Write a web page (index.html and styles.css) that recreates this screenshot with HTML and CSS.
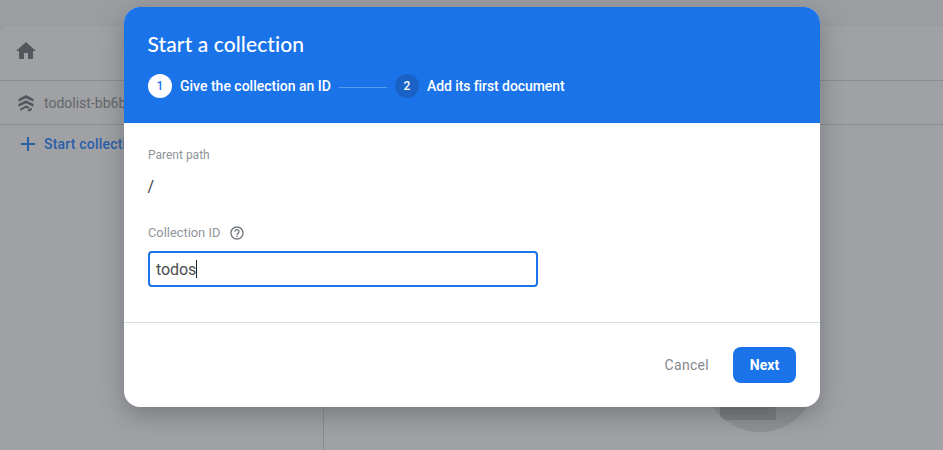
FILE: index.html
```html
<!DOCTYPE html>
<html lang="en">
<head>
<meta charset="utf-8">
<title>Start a collection</title>
<link rel="stylesheet" href="styles.css">
</head>
<body>
<main class="page">
  <section class="panel">
    <div class="crumb-row">
      <svg class="home" viewBox="0 0 24 24" width="24" height="24"><path d="M10 20v-6h4v6h5v-8h3L12 3 2 12h3v8z"/></svg>
    </div>
    <div class="project-row">
      <svg class="stack" viewBox="0 0 20 20" width="20" height="20"><path d="M10 2 2.500 6v2.800L10 5.200l7.500 3.600V6z"/><path d="M10 7.200 2.500 11v2.800L10 10.200l7.500 3.600V11z"/><path d="M10 12.500 4 15.700v2L10 14.800l2 .9 1.500-1.600z"/><path d="M11.500 18.500l1-2.500 3.500-1.200-.5 2.700z"/></svg>
      <span class="project-name">todolist-bb6b</span>
    </div>
    <div class="content">
      <div class="sidebar">
        <div class="start">
          <svg class="plus" viewBox="0 0 16 16" width="16" height="16"><path d="M7 1h2v6h6v2H9v6H7V9H1V7h6z"/></svg>
          <span>Start collection</span>
        </div>
      </div>
      <div class="canvas">
        <div class="disc"><div class="sheet"></div></div>
      </div>
    </div>
  </section>
</main>
<div class="overlay">
  <div class="dialog" role="dialog">
    <header class="dialog-head">
      <h1 class="dialog-title">Start a collection</h1>
      <ol class="steps">
        <li class="step"><span class="badge badge-active">1</span><span>Give the collection an ID</span></li>
        <li class="step-line"></li>
        <li class="step step-next"><span class="badge badge-next">2</span><span>Add its first document</span></li>
      </ol>
    </header>
    <div class="dialog-body">
      <div class="label">Parent path</div>
      <div class="path">/</div>
      <div class="label label-id">
        <span>Collection ID</span>
        <svg class="help" viewBox="0 0 24 24" width="16" height="16"><path d="M11 18h2v-2h-2v2zm1-16C6.480 2 2 6.480 2 12s4.480 10 10 10 10-4.480 10-10S17.520 2 12 2zm0 18c-4.410 0-8-3.590-8-8s3.590-8 8-8 8 3.590 8 8-3.590 8-8 8zm0-14c-2.210 0-4 1.790-4 4h2c0-1.100.9-2 2-2s2 .9 2 2c0 2-3 1.750-3 5h2c0-2.250 3-2.500 3-5 0-2.210-1.790-4-4-4z"/></svg>
      </div>
      <div class="field"><span>todos</span><i class="caret"></i></div>
    </div>
    <footer class="dialog-foot">
      <span class="cancel">Cancel</span>
      <span class="next">Next</span>
    </footer>
  </div>
</div>
</body>
</html>
```
FILE: styles.css
```css
* { box-sizing: border-box; }
html, body { margin: 0; height: 100%; }
body {
  width: 943px;
  height: 450px;
  overflow: hidden;
  background: #9b9da1;
  font-family: Roboto, "Liberation Sans", sans-serif;
  position: relative;
}
.page { height: 100%; padding-top: 25px; }
.panel {
  height: 425px;
  background: #9fa1a5;
  border-top: 1px solid #96989c;
  border-top-left-radius: 8px;
  display: flex;
  flex-direction: column;
}
.crumb-row {
  height: 55px;
  padding: 13px 0 0 14px;
  border-bottom: 1px solid #8a8c90;
  flex: none;
}
.home { fill: #55565c; display: block; }
.project-row {
  height: 44px;
  flex: none;
  display: flex;
  align-items: center;
  padding-left: 16px;
  gap: 8px;
  border-bottom: 1px solid #8a8c90;
  font-size: 14px;
  color: #64666b;
}
.stack { fill: #55565c; flex: none; }
.project-name { white-space: nowrap; }
.content { flex: 1; display: flex; min-height: 0; }
.sidebar { width: 324px; flex: none; border-right: 1px solid #8a8c90; padding: 11px 0 0 20px; }
.start {
  display: flex;
  align-items: center;
  gap: 8px;
  font-size: 14px;
  font-weight: 500;
  letter-spacing: .2px;
  color: #2a5ea8;
  white-space: nowrap;
}
.plus { fill: #2a5ea8; flex: none; }
.canvas { flex: 1; padding: 193px 0 0 379px; }
.disc {
  width: 114px;
  height: 114px;
  border-radius: 50%;
  background: #8f9195;
  position: relative;
  overflow: hidden;
}
.sheet {
  position: absolute;
  left: 17px;
  top: 28px;
  width: 56px;
  height: 74px;
  background: #77797d;
  border-right: 7px solid #7c7e82;
  border-bottom: 5px solid #7c7e82;
}
.overlay {
  position: absolute;
  inset: 0;
  padding: 7px 0 0 124px;
}
.dialog {
  width: 696px;
  height: 400px;
  background: #fff;
  border-radius: 16px;
  overflow: hidden;
  box-shadow: 0 8px 24px rgba(60, 64, 67, .4);
  display: flex;
  flex-direction: column;
}
.dialog-head {
  height: 116px;
  flex: none;
  background: #1a73e8;
  color: #fff;
  padding: 23px 24px 0;
}
.dialog-title {
  margin: 0 0 0 -.5px;
  font-family: Lato, Roboto, sans-serif;
  font-size: 21px;
  line-height: 27px;
  font-weight: 500;
  letter-spacing: .1px;
}
.steps {
  list-style: none;
  margin: 17px 0 0;
  padding: 0;
  display: flex;
  align-items: center;
  font-size: 14px;
  font-weight: 500;
}
.step { display: flex; align-items: center; gap: 8px; white-space: nowrap; }
.step-next { letter-spacing: -.08px; }
.badge {
  width: 24px;
  height: 24px;
  border-radius: 50%;
  display: flex;
  align-items: center;
  justify-content: center;
  font-size: 12px;
}
.badge-active { background: #fff; color: #1a73e8; }
.badge-next { background: #1a62c6; color: #fff; }
.step-line { width: 48px; height: 1px; background: #5a9bf0; margin: 2px 8px 0; }
.dialog-body { height: 199px; flex: none; padding: 25px 24px 0; }
.label { font-size: 12px; line-height: 14px; color: #90949a; }
.path { margin: 15px 0 0 -.5px; font-size: 16px; line-height: 20px; color: #3c4043; }
.label-id { margin-top: 28px; display: flex; align-items: center; gap: 9px; height: 16px; font-size: 12.85px; }
.help { fill: #70757a; }
.field {
  margin-top: 10px;
  width: 390px;
  height: 36px;
  border: 2px solid #1a73e8;
  border-radius: 4px;
  padding-left: 6px;
  display: flex;
  align-items: center;
  font-size: 16px;
  letter-spacing: -.1px;
  color: #4a4d50;
}
.caret { width: 1px; height: 18px; background: #202124; }
.dialog-foot {
  flex: 1;
  border-top: 1px solid #dadce0;
  display: flex;
  align-items: center;
  justify-content: flex-end;
  padding: 0 24px 0 0;
  gap: 24px;
  font-size: 14px;
  font-weight: 500;
}
.cancel { color: #85898e; font-weight: 400; letter-spacing: .3px; }
.next {
  width: 63px;
  height: 36px;
  background: #1a73e8;
  color: #fff;
  font-weight: 700;
  border-radius: 8px;
  display: flex;
  align-items: center;
  justify-content: center;
}
```
